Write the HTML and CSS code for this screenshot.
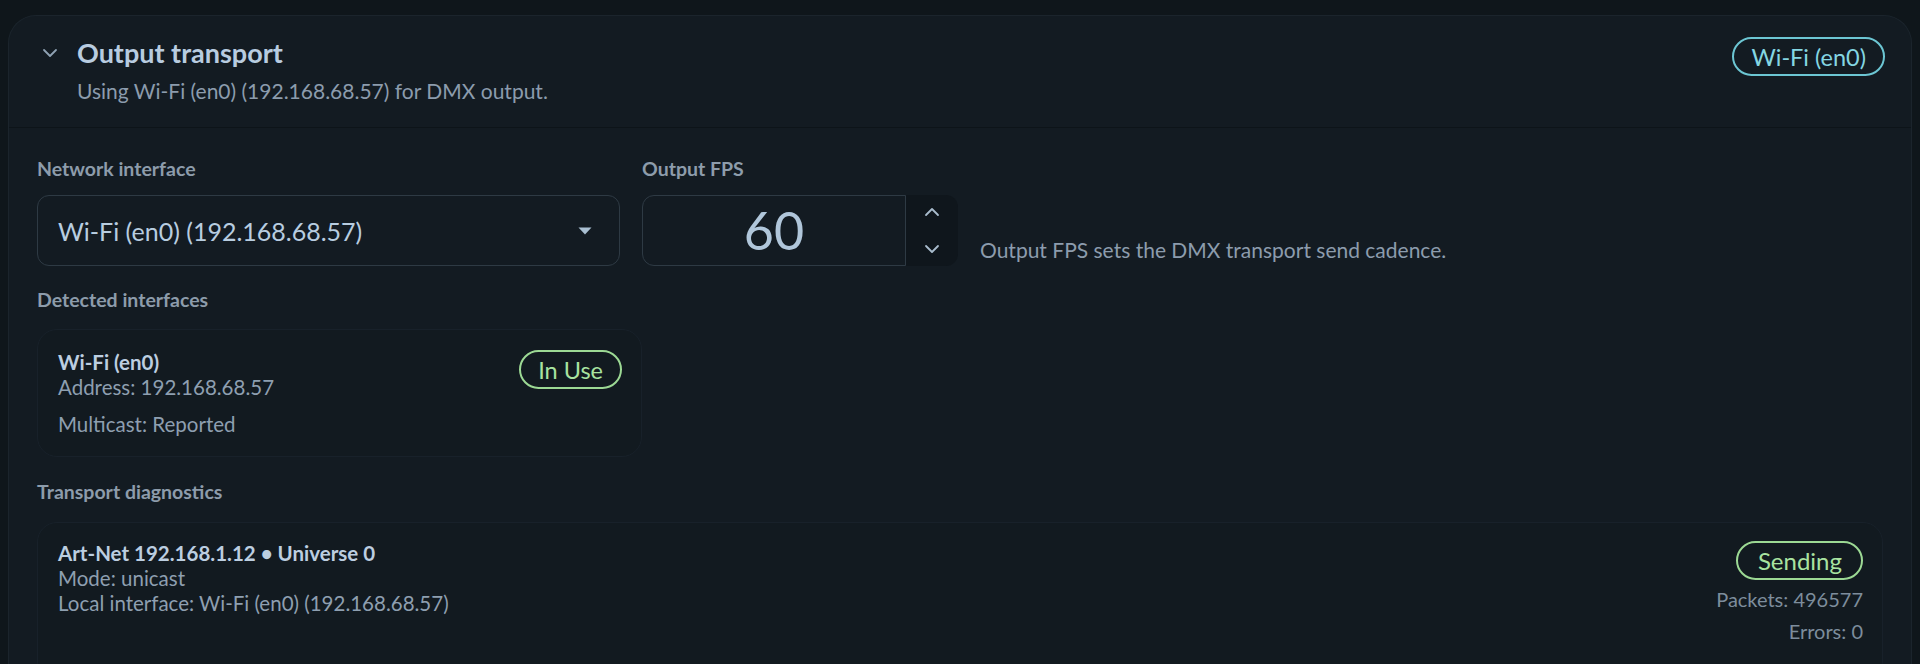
FILE: index.html
```html
<!DOCTYPE html>
<html lang="en">
<head>
  <meta charset="UTF-8" />
  <meta name="viewport" content="width=device-width, initial-scale=1.0"/>
  <title>Output transport</title>
  <link rel="stylesheet" href="styles.css">
</head>
<body>
  <section class="panel">
    <header class="panel-head">
      <svg class="collapse-icon" width="16" height="10" viewBox="0 0 16 10">
        <path d="M2 2 L8 8 L14 2" fill="none" stroke="#8fa2b4" stroke-width="1.8" stroke-linecap="round" stroke-linejoin="round"/>
      </svg>
      <div class="head-text">
        <h1>Output transport</h1>
        <p>Using Wi-Fi (en0) (192.168.68.57) for DMX output.</p>
      </div>
      <span class="pill pill-cyan">Wi-Fi (en0)</span>
    </header>

    <div class="panel-body">
      <div class="field-row">
        <div class="field field-iface">
          <label>Network interface</label>
          <div class="select">
            <span>Wi-Fi (en0) (192.168.68.57)</span>
            <svg width="14" height="8" viewBox="0 0 14 8"><path d="M0.5 0.5 H13.5 L7 7.5 Z" fill="#a9bfd2"/></svg>
          </div>
        </div>
        <div class="field">
          <label>Output FPS</label>
          <div class="number">
            <div class="number-value">60</div>
            <div class="spin">
              <svg width="16" height="10" viewBox="0 0 16 10"><path d="M2 8 L8 2 L14 8" fill="none" stroke="#a9bccd" stroke-width="1.8" stroke-linecap="round" stroke-linejoin="round"/></svg>
              <svg width="16" height="10" viewBox="0 0 16 10"><path d="M2 2 L8 8 L14 2" fill="none" stroke="#a9bccd" stroke-width="1.8" stroke-linecap="round" stroke-linejoin="round"/></svg>
            </div>
          </div>
        </div>
        <p class="help">Output FPS sets the DMX transport send cadence.</p>
      </div>

      <h2 class="section-label">Detected interfaces</h2>
      <div class="card card-iface">
        <div class="card-main">
          <div class="card-title">Wi-Fi (en0)</div>
          <div class="card-line">Address: 192.168.68.57</div>
          <div class="card-line card-gap">Multicast: Reported</div>
        </div>
        <span class="pill pill-green">In Use</span>
      </div>

      <h2 class="section-label">Transport diagnostics</h2>
      <div class="card card-diag">
        <div class="card-main">
          <div class="card-title">Art-Net 192.168.1.12 &bull; Universe 0</div>
          <div class="card-line">Mode: unicast</div>
          <div class="card-line">Local interface: Wi-Fi (en0) (192.168.68.57)</div>
        </div>
        <div class="card-stats">
          <span class="pill pill-green pill-wide">Sending</span>
          <div class="stat">Packets: 496577</div>
          <div class="stat stat-last">Errors: 0</div>
        </div>
      </div>
    </div>
  </section>
</body>
</html>
```

FILE: styles.css
```css
body {
  margin: 0;
  padding: 15px 8px 0;
  background-color: #0f161b;
  font-family: Lato, "Noto Sans", sans-serif;
  color: #b7cadc;
  height: 664px;
  box-sizing: border-box;
  overflow: hidden;
}

.panel {
  background-color: #131b22;
  border: 1px solid #1b242c;
  border-bottom: none;
  border-radius: 28px 28px 0 0;
  height: 100%;
}

/* En-tete */
.panel-head {
  display: flex;
  align-items: flex-start;
  height: 112px;
  box-sizing: border-box;
  padding: 20px 26px 0 33px;
  border-bottom: 1px solid #0d1419;
}

.collapse-icon {
  margin-top: 12px;
  margin-right: 19px;
}

.head-text {
  flex: 1;
}

.head-text h1 {
  margin: 0;
  font-size: 27px;
  font-weight: 700;
  line-height: 34px;
  color: #b8cce0;
}

.head-text p {
  margin: 8px 0 0;
  font-size: 21px;
  line-height: 26px;
  color: #8c9cad;
}

.pill {
  display: inline-flex;
  align-items: center;
  height: 39px;
  box-sizing: border-box;
  padding: 0 17px;
  border-radius: 20px;
  border: 2px solid;
  font-size: 23.5px;
  white-space: nowrap;
}

.pill-wide {
  padding: 0 19px 0 20px;
  font-size: 24px;
}

.pill-cyan {
  margin-top: 1px;
  color: #84d6e2;
  border-color: #6cc6d3;
}

.pill-green {
  color: #a8e3a0;
  border-color: #9cd994;
}

/* Corps */
.panel-body {
  padding: 29px 28px 0;
}

.field-row {
  display: flex;
  gap: 22px;
}

.field label,
.section-label {
  display: block;
  margin: 0 0 14px;
  font-size: 19.5px;
  font-weight: 700;
  line-height: 24px;
  color: #8d9cab;
}

.field-iface {
  width: 583px;
}

.select {
  display: flex;
  align-items: center;
  justify-content: space-between;
  height: 71px;
  box-sizing: border-box;
  padding: 0 27px 0 20px;
  border: 1px solid #2e3a44;
  border-radius: 12px;
  font-size: 25px;
  color: #b8cde0;
}

.number {
  display: flex;
  height: 71px;
}

.number-value {
  width: 264px;
  box-sizing: border-box;
  border: 1px solid #2e3a44;
  border-radius: 12px 0 0 12px;
  text-align: center;
  font-size: 52px;
  line-height: 69px;
  color: #b0c6da;
}

.spin {
  width: 52px;
  display: flex;
  flex-direction: column;
  align-items: center;
  justify-content: center;
  gap: 27px;
  background-color: #0f161c;
  border-radius: 0 12px 12px 0;
}

.help {
  align-self: flex-end;
  margin: 0 0 3px;
  font-size: 21px;
  line-height: 26px;
  color: #8c9cad;
}

.section-label {
  margin-top: 22px;
  margin-bottom: 17px;
}

.card {
  display: flex;
  justify-content: space-between;
  align-items: flex-start;
  box-sizing: border-box;
  background-color: #121a20;
  border: 1px solid #18212a;
  border-radius: 20px;
  padding: 20px 19px 19px 20px;
}

.card-iface {
  width: 605px;
}

.card-diag {
  height: 160px;
  padding-top: 18px;
}

.card-iface + .section-label {
  margin-top: 23px;
  margin-bottom: 18px;
}

.card-title {
  font-size: 20.5px;
  font-weight: 700;
  line-height: 25px;
  color: #bccee0;
}

.card-line {
  font-size: 20.5px;
  line-height: 25px;
  color: #8e9fb0;
}

.card-gap {
  margin-top: 12px;
}

.card-stats {
  display: flex;
  flex-direction: column;
  align-items: flex-end;
}

.stat {
  font-size: 20px;
  line-height: 25px;
  color: #7d8d9c;
  margin-top: 7px;
}

.stat-last {
  margin-top: 7px;
}
```
